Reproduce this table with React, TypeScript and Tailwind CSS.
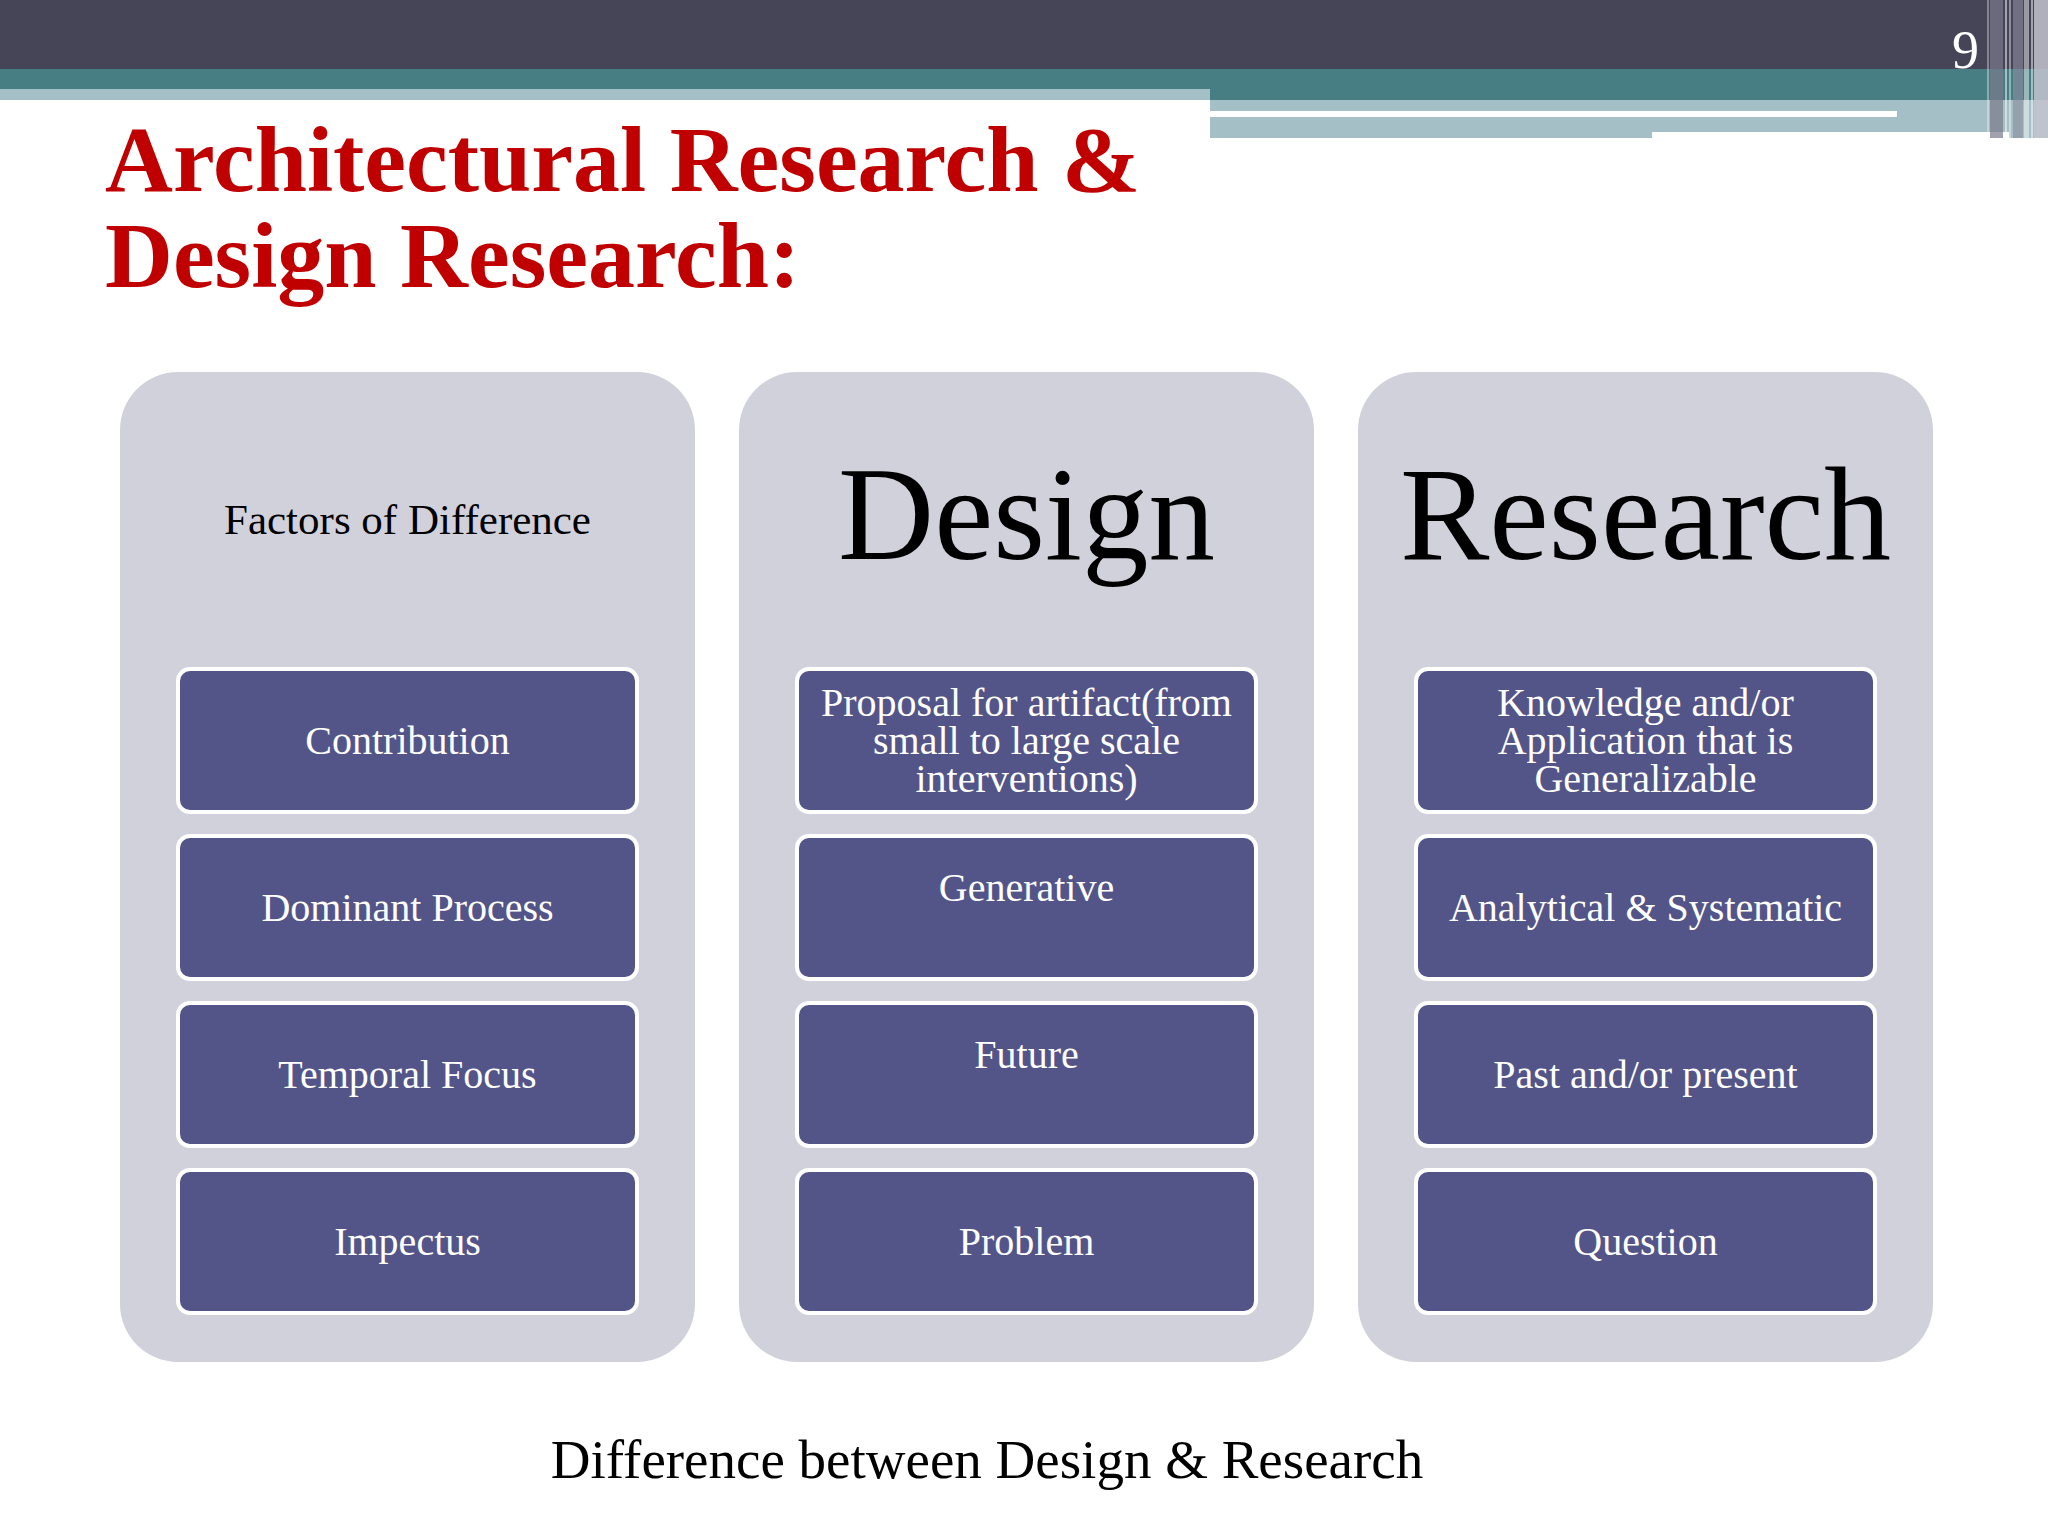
const serif = { fontFamily: '"Liberation Serif", "Times New Roman", serif' };

type Item = { text: string; top?: boolean };

type Column = {
  heading: string;
  headingClass: string;
  items: Item[];
};

const columns: Column[] = [
  {
    heading: 'Factors of Difference',
    headingClass: 'text-[43px] leading-[48px]',
    items: [
      { text: 'Contribution' },
      { text: 'Dominant Process' },
      { text: 'Temporal Focus' },
      { text: 'Impectus' },
    ],
  },
  {
    heading: 'Design',
    headingClass: 'text-[133px] leading-[150px] pb-[12px]',
    items: [
      { text: 'Proposal for artifact(from small to large scale interventions)' },
      { text: 'Generative', top: true },
      { text: 'Future', top: true },
      { text: 'Problem' },
    ],
  },
  {
    heading: 'Research',
    headingClass: 'text-[134px] leading-[150px] pb-[12px]',
    items: [
      { text: 'Knowledge and/or Application that is Generalizable' },
      { text: 'Analytical & Systematic' },
      { text: 'Past and/or present' },
      { text: 'Question' },
    ],
  },
];

function HeaderArt() {
  return (
    <svg
      className="absolute left-0 top-0"
      width={2048}
      height={138}
      viewBox="0 0 2048 138"
    >
      <rect x={0} y={0} width={2048} height={69} fill="#454557" />
      <rect x={0} y={69} width={2048} height={31} fill="#477e84" />
      <rect x={0} y={89} width={1210} height={11} fill="#a4bfc5" />
      <rect x={1210} y={100} width={838} height={38} fill="#a4bfc5" />
      <rect x={1210} y={111} width={687} height={6} fill="#ffffff" />
      <rect x={1652} y={132} width={357} height={6} fill="#ffffff" />
      {/* vertical stripes on the right edge */}
      <rect x={1987} y={0} width={2} height={138} fill="#ffffff" opacity={0.35} />
      <rect x={1990} y={0} width={13} height={138} fill="#7a7a8c" opacity={0.7} />
      <rect x={2005} y={0} width={2} height={138} fill="#ffffff" opacity={0.5} />
      <rect x={2009} y={0} width={2} height={138} fill="#ffffff" opacity={0.4} />
      <rect x={2013} y={0} width={10} height={138} fill="#8d8d9e" opacity={0.6} />
      <rect x={2024} y={0} width={5} height={138} fill="#ffffff" opacity={0.45} />
      <rect x={2031} y={0} width={2} height={138} fill="#ffffff" opacity={0.5} />
      <rect x={2034} y={0} width={14} height={138} fill="#c3c3cf" opacity={0.85} />
    </svg>
  );
}

function Box({ item }: { item: Item }) {
  return (
    <div
      className={`flex h-[147px] justify-center rounded-[14px] border-4 border-white bg-[#535589] px-3 text-center text-[40px] leading-[38px] text-white ${
        item.top ? 'items-start pt-[31px]' : 'items-center'
      }`}
    >
      <span className="max-w-[430px]">{item.text}</span>
    </div>
  );
}

function Card({ column }: { column: Column }) {
  return (
    <div className="flex w-[575px] flex-col rounded-[58px] bg-[#d1d1db] px-[56px] pb-[47px]">
      <div className="flex h-[295px] items-center justify-center">
        <span className={`text-black ${column.headingClass}`}>
          {column.heading}
        </span>
      </div>
      <div className="flex flex-col gap-[20px]">
        {column.items.map((item) => (
          <Box item={item} key={item.text} />
        ))}
      </div>
    </div>
  );
}

export default function App() {
  return (
    <div className="h-[1536px] w-[2048px] overflow-hidden bg-white" style={serif}>
      <div className="relative h-[100px]">
        <HeaderArt />
        <span className="absolute right-[69px] top-[23px] text-[54px] leading-[54px] text-white">
          9
        </span>
      </div>

      <h1 className="ml-[105px] mt-[11px] text-[94px] font-bold leading-[96px] text-[#c00000]">
        Architectural Research &amp;
        <br />
        Design Research:
      </h1>

      <div className="mt-[69px] flex gap-[44px] pl-[120px]">
        {columns.map((column) => (
          <Card column={column} key={column.heading} />
        ))}
      </div>

      <p className="mt-[66px] pr-[74px] text-center text-[55px] leading-[64px] text-black">
        Difference between Design &amp; Research
      </p>
    </div>
  );
}
